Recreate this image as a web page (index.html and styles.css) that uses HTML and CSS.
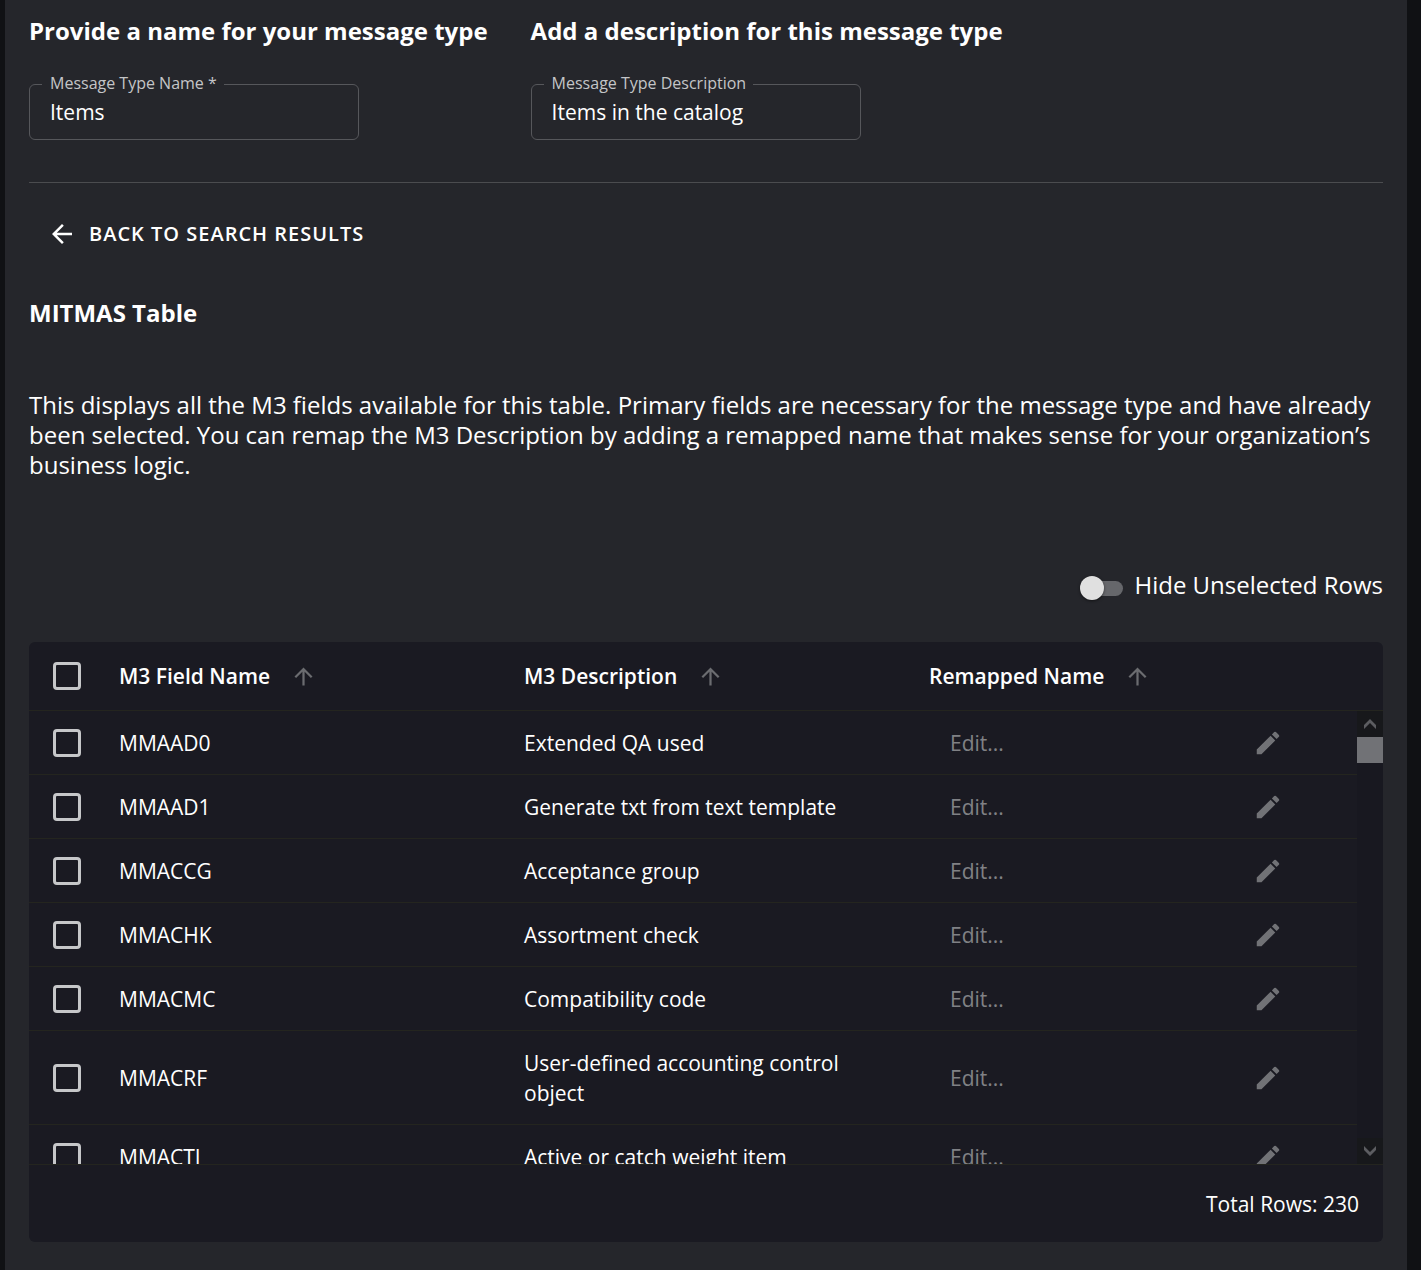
FILE: index.html
```
<!DOCTYPE html>
<html lang="en">
<head>
<meta charset="utf-8">
<meta name="viewport" content="width=device-width, initial-scale=1">
<title>Message type</title>
<link rel="stylesheet" href="styles.css">
</head>
<body>
<svg class="sprite" aria-hidden="true">
  <symbol id="arrow-up" viewBox="0 0 24 24"><path d="M4 12l1.41 1.41L11 7.83V20h2V7.83l5.58 5.59L20 12l-8-8-8 8z"/></symbol>
  <symbol id="arrow-back" viewBox="0 0 24 24"><path d="M20 11H7.83l5.59-5.59L12 4l-8 8 8 8 1.41-1.41L7.83 13H20v-2z"/></symbol>
  <symbol id="pencil" viewBox="0 0 24 24"><path d="M3 17.25V21h3.75L17.81 9.94l-3.75-3.75L3 17.25zM20.71 7.04c.39-.39.39-1.02 0-1.41l-2.34-2.34a.9959.9959 0 0 0-1.41 0l-1.83 1.83 3.75 3.75 1.83-1.83z"/></symbol>
</svg>
<main class="panel">
  <form class="details">
    <section>
      <h2 class="title">Provide a name for your message type</h2>
      <fieldset class="field">
        <legend><label for="type-name">Message Type Name *</label></legend>
        <input id="type-name" type="text" value="Items" required>
      </fieldset>
    </section>
    <section>
      <h2 class="title">Add a description for this message type</h2>
      <fieldset class="field">
        <legend><label for="type-description">Message Type Description</label></legend>
        <input id="type-description" type="text" value="Items in the catalog">
      </fieldset>
    </section>
  </form>
  <hr class="divider">
  <button class="back" type="button"><svg class="icon"><use href="#arrow-back"/></svg>BACK TO SEARCH RESULTS</button>
  <h2 class="title">MITMAS Table</h2>
  <p class="intro">This displays all the M3 fields available for this table. Primary fields are necessary for the message type and have already been selected. You can remap the M3 Description by adding a remapped name that makes sense for your organization’s business logic.</p>
  <label class="toggle"><input class="switch" type="checkbox" role="switch">Hide Unselected Rows</label>
  <section class="card">
    <div class="viewport">
      <table class="fields">
        <thead>
          <tr>
            <th><input class="check" type="checkbox" aria-label="Select all rows"></th>
            <th><button class="sort" type="button">M3 Field Name<svg class="sort-icon"><use href="#arrow-up"/></svg></button></th>
            <th><button class="sort" type="button">M3 Description<svg class="sort-icon"><use href="#arrow-up"/></svg></button></th>
            <th><button class="sort" type="button">Remapped Name<svg class="sort-icon"><use href="#arrow-up"/></svg></button></th>
          </tr>
        </thead>
        <tbody>
          <tr>
            <td><input class="check" type="checkbox" aria-label="Select MMAAD0"></td>
            <td>MMAAD0</td>
            <td>Extended QA used</td>
            <td class="remap"><input type="text" placeholder="Edit..." aria-label="Remapped name for MMAAD0"><button type="button" aria-label="Edit MMAAD0"><svg class="icon"><use href="#pencil"/></svg></button></td>
          </tr>
          <tr>
            <td><input class="check" type="checkbox" aria-label="Select MMAAD1"></td>
            <td>MMAAD1</td>
            <td>Generate txt from text template</td>
            <td class="remap"><input type="text" placeholder="Edit..." aria-label="Remapped name for MMAAD1"><button type="button" aria-label="Edit MMAAD1"><svg class="icon"><use href="#pencil"/></svg></button></td>
          </tr>
          <tr>
            <td><input class="check" type="checkbox" aria-label="Select MMACCG"></td>
            <td>MMACCG</td>
            <td>Acceptance group</td>
            <td class="remap"><input type="text" placeholder="Edit..." aria-label="Remapped name for MMACCG"><button type="button" aria-label="Edit MMACCG"><svg class="icon"><use href="#pencil"/></svg></button></td>
          </tr>
          <tr>
            <td><input class="check" type="checkbox" aria-label="Select MMACHK"></td>
            <td>MMACHK</td>
            <td>Assortment check</td>
            <td class="remap"><input type="text" placeholder="Edit..." aria-label="Remapped name for MMACHK"><button type="button" aria-label="Edit MMACHK"><svg class="icon"><use href="#pencil"/></svg></button></td>
          </tr>
          <tr>
            <td><input class="check" type="checkbox" aria-label="Select MMACMC"></td>
            <td>MMACMC</td>
            <td>Compatibility code</td>
            <td class="remap"><input type="text" placeholder="Edit..." aria-label="Remapped name for MMACMC"><button type="button" aria-label="Edit MMACMC"><svg class="icon"><use href="#pencil"/></svg></button></td>
          </tr>
          <tr>
            <td><input class="check" type="checkbox" aria-label="Select MMACRF"></td>
            <td>MMACRF</td>
            <td>User-defined accounting control object</td>
            <td class="remap"><input type="text" placeholder="Edit..." aria-label="Remapped name for MMACRF"><button type="button" aria-label="Edit MMACRF"><svg class="icon"><use href="#pencil"/></svg></button></td>
          </tr>
          <tr>
            <td><input class="check" type="checkbox" aria-label="Select MMACTI"></td>
            <td>MMACTI</td>
            <td>Active or catch weight item</td>
            <td class="remap"><input type="text" placeholder="Edit..." aria-label="Remapped name for MMACTI"><button type="button" aria-label="Edit MMACTI"><svg class="icon"><use href="#pencil"/></svg></button></td>
          </tr>
        </tbody>
      </table>
      <div class="scrollbar">
        <button type="button" aria-label="Scroll up"><svg viewBox="0 0 12 10"><path d="M0 10V6l6-6 6 6v4L6 4z"/></svg></button>
        <span class="thumb"></span>
        <button class="down" type="button" aria-label="Scroll down"><svg viewBox="0 0 12 10"><path d="M0 0v4l6 6 6-6V0L6 6z"/></svg></button>
      </div>
    </div>
    <footer class="total">Total Rows: 230</footer>
  </section>
</main>
</body>
</html>
```
FILE: styles.css
```
:root {
  --panel: #25262b;
  --card: #1a1a22;
  --line: #24251f;
  --muted: #717276;
}

* {
  box-sizing: border-box;
}

body {
  margin: 0;
  padding: 0 14px 0 5px;
  background: #101114;
  color: #fff;
  font-family: "Open Sans", "Noto Sans", sans-serif;
  font-size: 21px;
  line-height: 30px;
}

button,
input {
  font: inherit;
  color: inherit;
  margin: 0;
  padding: 0;
  border: 0;
  background: none;
}

svg {
  display: block;
  fill: currentColor;
}

.sprite {
  display: none;
}

.icon {
  width: 30px;
  height: 30px;
}

.panel {
  display: flex;
  flex-direction: column;
  min-height: 100vh;
  padding: 16px 24px 28px;
  background: var(--panel);
}

.title {
  margin: 0;
  font-size: 24px;
  line-height: 30px;
  font-weight: 700;
}

.details {
  display: flex;
  flex-wrap: wrap;
  gap: 30px 43px;
}

.field {
  width: 330px;
  margin: 30px 0 0;
  padding: 0 0 7px 12px;
  border: 1px solid #56575b;
  border-radius: 6px;
}

.field legend {
  padding: 0 7px 2px 8px;
  font-size: 16px;
  line-height: 14px;
  color: #c4c5c7;
}

.field label {
  display: block;
}

.field input {
  display: block;
  width: 100%;
  height: 40px;
  padding: 0 8px;
}

.divider {
  width: 100%;
  height: 1px;
  margin: 42px 0 30px;
  border: 0;
  background: #4b4c4f;
}

.back {
  display: flex;
  align-items: center;
  align-self: flex-start;
  gap: 12px;
  margin-bottom: 43px;
  padding: 6px 18px;
  font-size: 20px;
  font-weight: 600;
  letter-spacing: 1px;
}

.intro {
  margin: 62px 0 90px;
  font-size: 24px;
}

.toggle {
  display: flex;
  align-items: flex-end;
  align-self: flex-end;
  gap: 11px;
  margin-bottom: 42px;
  font-size: 24px;
}

.switch {
  appearance: none;
  display: grid;
  align-items: center;
  width: 43px;
  height: 24px;
}

.switch::before,
.switch::after {
  content: "";
  grid-area: 1 / 1;
}

.switch::before {
  justify-self: end;
  width: 36px;
  height: 15px;
  border-radius: 8px;
  background: #66676b;
}

.switch::after {
  width: 24px;
  height: 24px;
  border-radius: 50%;
  background: #e0e0e0;
  box-shadow: 0 1px 3px rgba(0, 0, 0, 0.5);
}

.switch:checked::after {
  justify-self: end;
}

.card {
  overflow: hidden;
  border-radius: 6px;
  background: var(--card);
}

.viewport {
  display: grid;
  grid-template-columns: 1fr 26px;
  grid-template-rows: 69px 453px;
}

.fields {
  display: block;
  grid-area: 1 / 1 / 3 / 3;
}

.fields thead,
.fields tbody {
  display: block;
}

.fields tbody {
  height: 453px;
  padding-right: 26px;
  overflow: hidden;
}

.fields tr {
  display: grid;
  grid-template-columns: 90px repeat(3, 1fr);
  align-items: center;
  padding: 17px 23px 16px 0;
  border-bottom: 1px solid var(--line);
}

.fields thead tr {
  padding: 19px 49px 19px 0;
}

.fields th,
.fields td {
  padding: 0 48px 0 0;
  text-align: left;
}

.fields th:first-child,
.fields td:first-child {
  padding: 0 0 0 24px;
}

.fields .remap {
  display: flex;
  align-items: center;
  justify-content: space-between;
  padding: 0 51px 0 21px;
  color: var(--muted);
}

.remap input {
  flex: 1;
  min-width: 0;
  height: 30px;
}

.remap input::placeholder {
  color: #808185;
  opacity: 1;
}

.check {
  appearance: none;
  display: block;
  width: 28px;
  height: 28px;
  border: 3px solid #c6c7c9;
  border-radius: 4px;
}

.check:checked {
  background: #c6c7c9;
}

.sort {
  display: flex;
  align-items: center;
  gap: 20px;
  font-weight: 600;
}

.sort-icon {
  width: 27px;
  height: 27px;
  color: #6b6c70;
}

.scrollbar {
  display: flex;
  flex-direction: column;
  grid-area: 2 / 2;
  background: #181820;
}

.scrollbar button {
  display: grid;
  place-items: center;
  height: 26px;
  background: #17181b;
  color: #5c5d61;
}

.scrollbar svg {
  width: 12px;
  height: 10px;
}

.scrollbar .down {
  margin-top: auto;
}

.thumb {
  height: 26px;
  background: var(--muted);
}

.total {
  padding: 24px 24px 23px;
  border-top: 1px solid var(--line);
  text-align: right;
}
```
